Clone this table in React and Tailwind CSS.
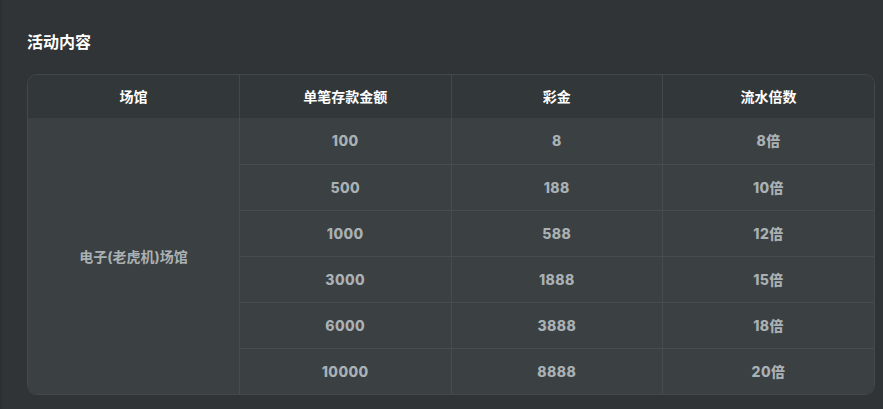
const rows = [
  { amount: '100', bonus: '8', times: '8倍' },
  { amount: '500', bonus: '188', times: '10倍' },
  { amount: '1000', bonus: '588', times: '12倍' },
  { amount: '3000', bonus: '1888', times: '15倍' },
  { amount: '6000', bonus: '3888', times: '18倍' },
  { amount: '10000', bonus: '8888', times: '20倍' },
]

const font = { fontFamily: 'Inter, "Noto Sans CJK SC", sans-serif' }

export default function App() {
  return (
    <div className="h-[409px] overflow-hidden bg-[#303436] border-l-2 border-[#2b2f31] pt-[30px]" style={font}>
      <div className="pl-[25px] pr-[8px]">
        <h2 className="text-[16px] font-bold text-white leading-[24px] mb-[20px]">活动内容</h2>
        <div className="rounded-[10px] border border-[#43484b] overflow-hidden">
          <table className="w-full border-collapse table-fixed">
            <thead>
              <tr className="bg-[#323739] h-[43px]">
                {['场馆', '单笔存款金额', '彩金', '流水倍数'].map((h, i) => (
                  <th
                    key={h}
                    className={`text-[14px] font-bold text-white text-center ${i > 0 ? 'border-l border-[#43484b]' : ''}`}
                  >
                    {h}
                  </th>
                ))}
              </tr>
            </thead>
            <tbody className="bg-[#3b4043]">
              {rows.map((r, i) => (
                <tr key={r.amount} className={`h-[46px] ${i > 0 ? 'border-t border-[#474c4f]' : ''}`}>
                  {i === 0 && (
                    <td rowSpan={rows.length} className="text-center text-[14px] font-bold text-[#aab1b4]">
                      电子(老虎机)场馆
                    </td>
                  )}
                  <td className="text-center text-[14px] font-extrabold tracking-[0.4px] text-[#aab1b4] border-l border-[#474c4f]">{r.amount}</td>
                  <td className="text-center text-[14px] font-extrabold tracking-[0.4px] text-[#aab1b4] border-l border-[#474c4f]">{r.bonus}</td>
                  <td className="text-center text-[14px] font-extrabold tracking-[0.4px] text-[#aab1b4] border-l border-[#474c4f]">{r.times}</td>
                </tr>
              ))}
            </tbody>
          </table>
        </div>
      </div>
    </div>
  )
}
